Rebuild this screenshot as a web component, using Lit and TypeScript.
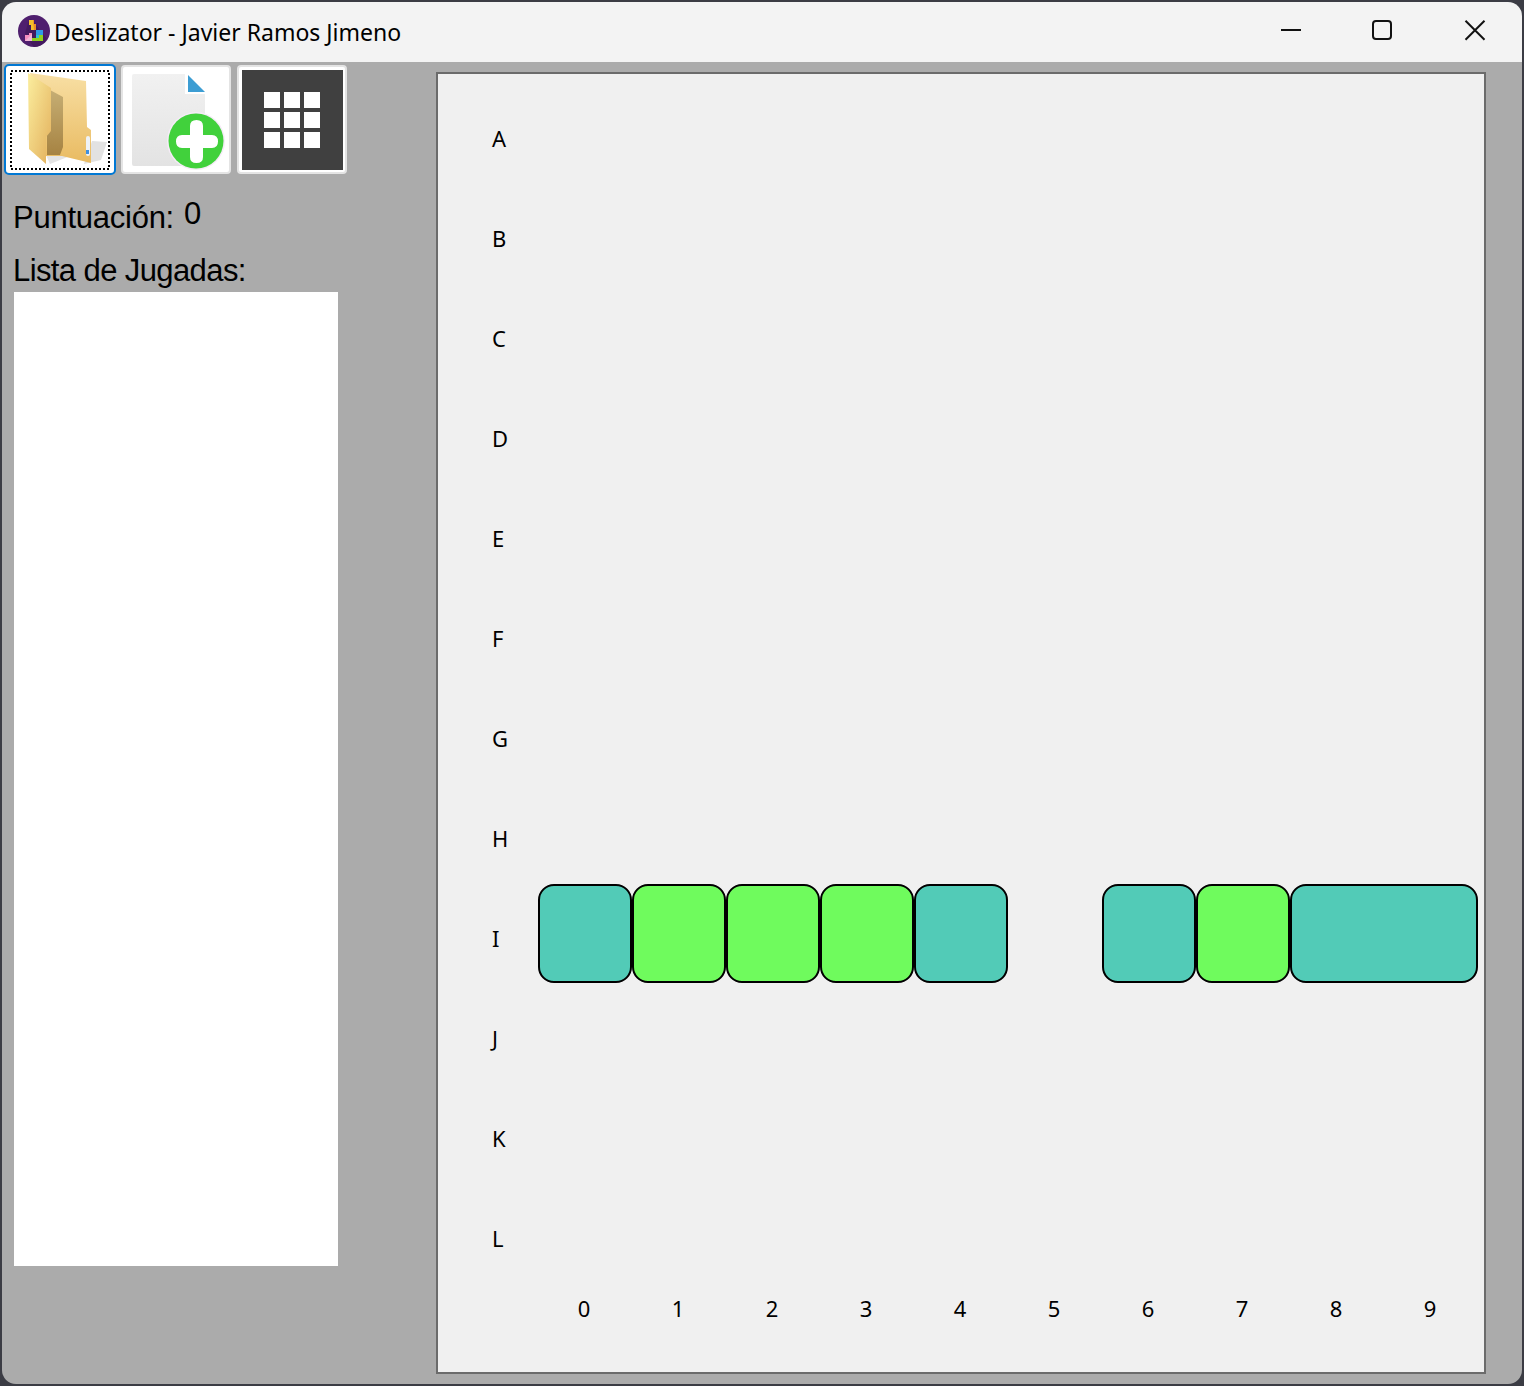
import { LitElement, html, css, svg } from 'lit';
import { customElement } from 'lit/decorators.js';

const ROWS = ['A', 'B', 'C', 'D', 'E', 'F', 'G', 'H', 'I', 'J', 'K', 'L'];
const COLS = [0, 1, 2, 3, 4, 5, 6, 7, 8, 9];

// tiles of the current board: row index, first column, span, colour
const TILES = [
  { row: 8, col: 0, span: 1, kind: 'teal' },
  { row: 8, col: 1, span: 1, kind: 'lime' },
  { row: 8, col: 2, span: 1, kind: 'lime' },
  { row: 8, col: 3, span: 1, kind: 'lime' },
  { row: 8, col: 4, span: 1, kind: 'teal' },
  { row: 8, col: 6, span: 1, kind: 'teal' },
  { row: 8, col: 7, span: 1, kind: 'lime' },
  { row: 8, col: 8, span: 2, kind: 'teal' },
];

const appIcon = svg`
  <svg class="app-icon" width="32" height="32" viewBox="18 15 32 32">
    <circle cx="34" cy="31" r="16" fill="#4f1f6e" />
    <path d="M31 19 L47 39 A16 16 0 0 1 34 47 L30 42 L25 33 L29 20 Z" fill="#431a5e" />
    <path d="M29 20 H34 V24 H36 V30 H31 V25 H29 Z" fill="#f5c02c" />
    <path d="M33 20 H34 V24 H36 V30 H34 Z" fill="#ee8f24" />
    <path d="M36 30 H43 V38 H39 V35 H36 Z" fill="#2f9be8" />
    <path d="M36 35 H39 V38 H36 Z" fill="#2fc4d0" />
    <path d="M32 38 H39 V35 H43 V41 H32 Z" fill="#8fd11f" />
    <path d="M25 35 H29 V33 H32 V41 H25 Z" fill="#f58fc0" />
    <path d="M25 41 L32 34 V41 Z" fill="#f2b6d6" />
  </svg>
`;

const folderIcon = svg`
  <svg class="btn-art" viewBox="5 65 110 109">
    <defs>
      <linearGradient id="fback" x1="0" y1="0" x2="0" y2="1">
        <stop offset="0" stop-color="#f8dfa4" />
        <stop offset="1" stop-color="#e9bb62" />
      </linearGradient>
      <linearGradient id="fleaf" x1="0" y1="0" x2="1" y2="1">
        <stop offset="0" stop-color="#fbee9f" />
        <stop offset="1" stop-color="#e3b05c" />
      </linearGradient>
      <linearGradient id="fpocket" x1="0" y1="0" x2="0" y2="1">
        <stop offset="0" stop-color="#c6ae74" />
        <stop offset="1" stop-color="#a68342" />
      </linearGradient>
    </defs>
    <g class="soft">
      <path d="M92 141 L107 142 L101 160 L84 164 Z" fill="#e2e2e2" />
      <path d="M46 155 L50 164 L70 156 L60 154 Z" fill="#e4e4e4" />
      <path d="M30 73 L86 81 L87 127 L91 130 L91 163 L62 156 L46 156 Z" fill="url(#fback)" />
      <path d="M50 90 L63 97 V147 L60 155 H47 V134 L50 130 Z" fill="url(#fpocket)" />
      <path d="M28 73 L51 88 V131 L46 137 V164 L29 149 Z" fill="url(#fleaf)" />
      <rect x="86" y="136" width="4" height="20" rx="2" fill="#eef2f6" />
      <rect x="86" y="150" width="3" height="4" fill="#3d8fe0" />
    </g>
    <rect x="11" y="71" width="98" height="98" fill="none" stroke="#000" stroke-width="2" stroke-dasharray="2 2" />
  </svg>
`;

const newIcon = svg`
  <svg class="btn-art" viewBox="121 65 110 109">
    <defs>
      <linearGradient id="dpage" x1="0" y1="0" x2="0" y2="1">
        <stop offset="0" stop-color="#f1f1f1" />
        <stop offset="1" stop-color="#e3e3e3" />
      </linearGradient>
    </defs>
    <g class="soft">
      <path d="M132 76 Q132 74 134 74 H185 V94 H205 V164 Q205 166 203 166 H134 Q132 166 132 164 Z" fill="url(#dpage)" />
      <path d="M188 75 L205 92 H188 Z" fill="#3c9dd3" />
      <circle cx="196" cy="141" r="29" fill="#f6ecf8" />
      <circle cx="196" cy="141" r="27.5" fill="#41d13c" />
      <path d="M190 126 Q190 120 196.5 120 Q203 120 203 126 V135 H212 Q218 135 218 141.5 Q218 148 212 148 H203 V157 Q203 163 196.5 163 Q190 163 190 157 V148 H182 Q176 148 176 141.5 Q176 135 182 135 H190 Z" fill="#fff" />
    </g>
  </svg>
`;

const gridIcon = svg`
  <svg class="btn-art" viewBox="237 65 110 109">
    <rect x="242" y="70" width="101" height="100" fill="#404040" />
    <g fill="#fff">
      ${[264, 284, 304].flatMap((x) =>
        [92, 112, 132].map((y) => svg`<rect x=${x} y=${y} width="16" height="16" />`)
      )}
    </g>
  </svg>
`;

@customElement('app-root')
export class AppRoot extends LitElement {
  render() {
    return html`
      <div class="window">
        <div class="titlebar">
          ${appIcon}
          <span class="title">Deslizator - Javier Ramos Jimeno</span>
          <div class="controls">
            <svg viewBox="0 0 22 22"><path d="M1 10 H21" /></svg>
            <svg viewBox="0 0 22 22"><rect x="1" y="1" width="18" height="18" rx="3" /></svg>
            <svg viewBox="0 0 22 22"><path d="M1.5 0.7 L20.5 19.7 M20.5 0.7 L1.5 19.7" /></svg>
          </div>
        </div>
        <div class="body">
          <aside class="sidebar">
            <div class="toolbar">
              <button class="tool focused">${folderIcon}</button>
              <button class="tool">${newIcon}</button>
              <button class="tool">${gridIcon}</button>
            </div>
            <div class="score">
              <span class="score-label">Puntuación:</span>
              <span class="value">0</span>
            </div>
            <div class="list-label">Lista de Jugadas:</div>
            <div class="moves"></div>
          </aside>
          <main class="board">
            ${ROWS.map(
              (r, i) => html`<div class="row-label" style="grid-row: ${i + 1}">${r}</div>`
            )}
            ${COLS.map(
              (c) => html`<div class="col-label" style="grid-column: ${c + 2}">${c}</div>`
            )}
            ${TILES.map(
              (t) => html`<div
                class="tile ${t.kind}"
                style="grid-row: ${t.row + 1}; grid-column: ${t.col + 2} / span ${t.span}"
              ></div>`
            )}
          </main>
        </div>
      </div>
    `;
  }

  static styles = css`
    :host {
      display: block;
      width: 1524px;
      height: 1386px;
      background: #3b3c44;
    }

    .window {
      box-sizing: border-box;
      width: 1524px;
      height: 1386px;
      padding: 2px;
    }

    .window > * {
      width: 1520px;
    }

    .titlebar {
      display: flex;
      align-items: center;
      height: 60px;
      background: #f3f3f3;
      border-radius: 14px 14px 0 0;
      box-sizing: border-box;
      padding-left: 16px;
    }

    .app-icon {
      margin-top: -2px;
    }

    .title {
      margin-left: 4px;
      font: 23px 'Noto Sans', sans-serif;
      color: #000;
      white-space: nowrap;
    }

    .controls {
      margin-left: auto;
      display: flex;
      margin-right: 1px;
      margin-top: -2px;
    }

    .controls svg {
      width: 22px;
      height: 22px;
      margin: 0 35px;
      fill: none;
      stroke: #111;
      stroke-width: 2;
    }

    .body {
      display: flex;
      height: 1322px;
      background: #ababab;
      border-radius: 0 0 14px 14px;
    }

    .sidebar {
      box-sizing: border-box;
      width: 434px;
      padding: 3px 0 0 3px;
      font-family: 'Liberation Sans', sans-serif;
      color: #000;
    }

    .toolbar {
      display: flex;
      gap: 6px;
    }

    .tool {
      box-sizing: border-box;
      width: 110px;
      height: 109px;
      padding: 0;
      display: block;
      background: #fff;
      border: 2px solid #e4e4e4;
      border-radius: 4px;
      position: relative;
    }

    .tool.focused {
      border-color: #fff;
      outline: 2px solid #0078d4;
      outline-offset: -1px;
    }

    .btn-art {
      position: absolute;
      left: -2px;
      top: -2px;
      width: 110px;
      height: 109px;
    }

    .soft {
      filter: blur(0.6px);
    }

    .score {
      display: flex;
      align-items: flex-start;
      gap: 10px;
      margin: 26px 0 0 8px;
      font-size: 31px;
      line-height: 36px;
    }

    .score-label {
      letter-spacing: -0.25px;
    }

    .score .value {
      margin-top: -4px;
    }

    .list-label {
      margin: 17px 0 0 8px;
      font-size: 31px;
      line-height: 36px;
      letter-spacing: -0.6px;
    }

    .moves {
      width: 324px;
      height: 974px;
      margin: 3px 0 0 9px;
      background: #fff;
    }

    .board {
      box-sizing: border-box;
      width: 1050px;
      height: 1302px;
      margin-top: 10px;
      padding-top: 10px;
      background: #f0f0f0;
      border: 2px solid #6b6b6b;
      display: grid;
      grid-template-columns: 100px repeat(10, 94px);
      grid-template-rows: repeat(12, 100px) 50px;
      font: 22px 'Noto Sans', sans-serif;
      color: #000;
    }

    .row-label {
      grid-column: 1;
      padding: 39px 0 0 54px;
      line-height: 30px;
    }

    .col-label {
      grid-row: 13;
      text-align: center;
      line-height: 48px;
      padding-right: 2px;
    }

    .tile {
      box-sizing: border-box;
      height: 99px;
      border: 2px solid #000;
      border-radius: 16px;
    }

    .teal {
      background: #52cbb7;
    }

    .lime {
      background: #6ffb5d;
    }
  `;
}
